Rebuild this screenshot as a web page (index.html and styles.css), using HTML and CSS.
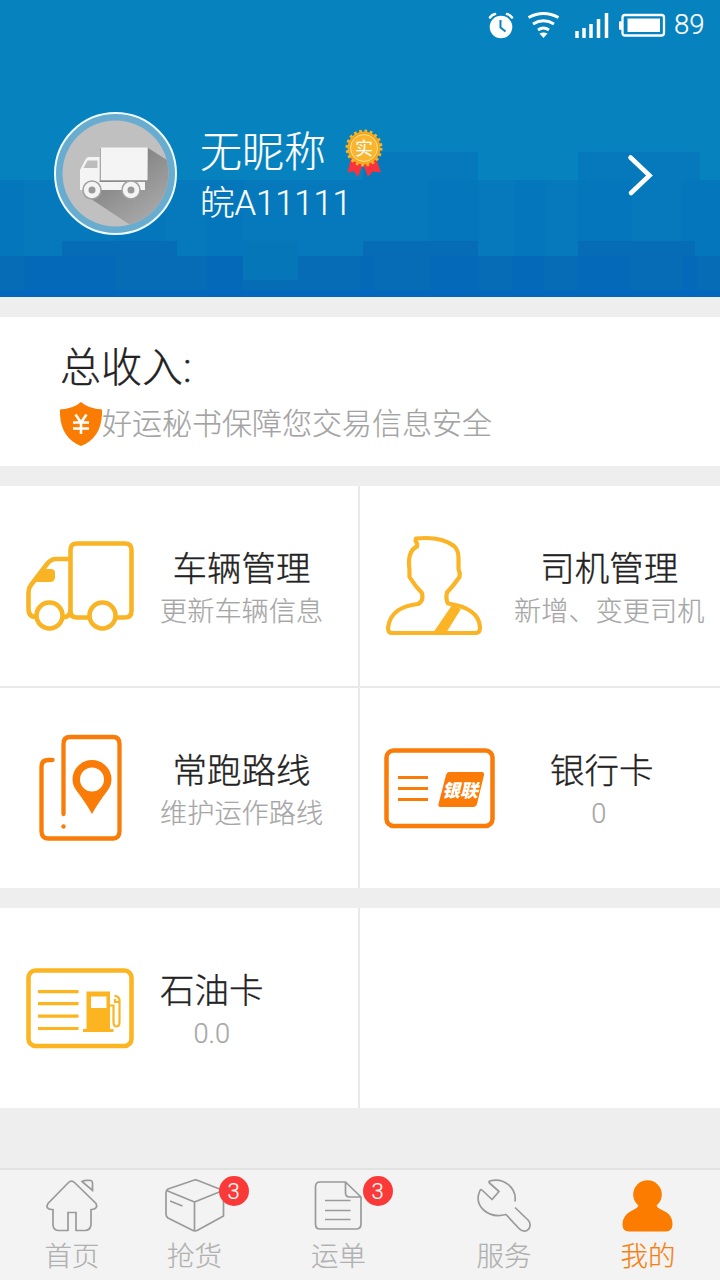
FILE: index.html
```html
<!DOCTYPE html>
<html lang="zh-CN">
<head>
<meta charset="utf-8">
<title>我的</title>
<link rel="stylesheet" href="styles.css">
</head>
<body>
<div class="app">
  <header class="hero">
    <svg class="skyline" viewBox="0 0 720 297">
      <rect width="720" height="297" fill="#0682bf"/>
      <g fill="#0470b8" fill-opacity=".5">
        <rect y="180" width="363" height="76"/><rect x="363" y="152" width="115" height="104"/>
        <rect x="478" y="180" width="100" height="76"/>
        <rect x="578" y="152" width="122" height="104"/><rect x="700" y="180" width="20" height="76"/>
      </g>
      <g fill="#0367b9" fill-opacity=".16">
        <rect y="180" width="24" height="76"/><rect x="115" y="180" width="50" height="61"/>
        <rect x="207" y="180" width="36" height="76"/><rect x="428" y="180" width="50" height="61"/>
        <rect x="515" y="180" width="30" height="76"/><rect x="578" y="180" width="54" height="61"/>
        <rect x="682" y="180" width="38" height="76"/>
      </g>
      <path fill="#066cb5" d="M0 256H62V241H177V256H363V241H478V256H578V241H695V256H720V297H0Z"/>
      <g fill="#0366bf" fill-opacity=".4">
        <rect x="24" y="256" width="38" height="41"/><rect x="62" y="256" width="54" height="41"/>
        <rect x="360" y="256" width="14" height="41"/><rect x="430" y="256" width="49" height="41"/>
        <rect x="512" y="256" width="32" height="41"/><rect x="578" y="256" width="52" height="41"/>
        <rect x="683" y="256" width="14" height="41"/><rect x="207" y="256" width="36" height="41"/>
      </g>
      <rect x="243" y="241" width="55" height="39" fill="#0577b9"/>
      <rect y="290" width="720" height="7" fill="#0467be"/>
    </svg>
    <div class="statusbar">
      <svg class="st-clock" viewBox="488 10 26 30"><circle cx="501" cy="27" r="11.3" fill="#fff"/><path d="M490 17.5q2-3 5-3.5M512 17.5q-2-3-5-3.5" stroke="#fff" stroke-width="2.6" fill="none" stroke-linecap="round"/><path d="M500.5 20v7.500l5 4" stroke="#0682bf" stroke-width="2" fill="none"/></svg>
      <svg class="st-wifi" viewBox="526 10 34 30" fill="none" stroke="#fff" stroke-width="2.800"><path d="M528.500 17.500q15-8 30 0M533 24q10.500-6.500 21 0M538 30q5.500-4 11 0"/><path d="M539.500 33.500q4-2 8 0l-4 4.500z" fill="#fff" stroke="none"/></svg>
      <svg class="st-signal" viewBox="574 10 36 30" stroke="#fff" stroke-width="3.500"><path d="M577 31v7M584 28v10M591 24v14M598.500 19v19M606.500 13v25"/></svg>
      <svg class="st-battery" viewBox="618 10 48 30"><rect x="622.500" y="15" width="41.500" height="20.500" rx="2.500" fill="none" stroke="#fff" stroke-width="2.300"/><rect x="627.500" y="18.500" width="32.500" height="13.500" fill="#fff"/><rect x="619" y="21" width="3" height="9" rx="1.500" fill="#fff"/></svg>
      <span class="st-level">89</span>
    </div>
    <div class="profile">
      <svg class="avatar" viewBox="53 111 125 125">
        <defs>
          <linearGradient id="shade" x1="0" y1="0" x2=".7" y2="1"><stop offset=".3" stop-color="#858585"/><stop offset="1" stop-color="#b4b3b3"/></linearGradient>
          <clipPath id="disc"><circle cx="115.500" cy="173.500" r="53"/></clipPath>
        </defs>
        <circle cx="115.500" cy="173.500" r="60.500" fill="#68accf" stroke="#effcff" stroke-width="2"/>
        <circle cx="115.500" cy="173.500" r="53" fill="#c1c0c0"/>
        <path clip-path="url(#disc)" fill="url(#shade)" d="M148 148L180 168V240H153L88 197L100 180H147Z"/>
        <path fill="#f4f4f4" d="M80 190.500V170l6-11.500q1-1.500 3-1.500H99.500V182H145V190H80Z"/>
        <rect x="100.500" y="147.500" width="47" height="32.500" fill="#f4f4f4"/>
        <path fill="none" stroke="#a8a8a8" d="M100.500 148V180.500H147"/>
        <path fill="#bcbcbc" d="M83.500 168l4-7.500h10V168Z"/>
        <g fill="#f4f4f4" stroke="#a0a0a0" stroke-width="1.500"><circle cx="92" cy="190" r="9"/><circle cx="131" cy="190" r="9"/></g>
        <circle cx="92" cy="190" r="3.500" fill="#999"/><circle cx="131" cy="190" r="3.500" fill="#999"/>
      </svg>
      <div class="who">
        <div class="name-row">
          <span class="name">无昵称</span>
          <span class="medal">
            <svg viewBox="344 127 40 51"><path fill="#f8333c" d="M351 158l-3.500 15 6-2 4.500 6 5-13 5 13 4.500-5.500 8.500 1-5-14Z"/><circle cx="364" cy="148" r="16.500" fill="#f5a51c"/><circle cx="364" cy="148" r="17" fill="none" stroke="#f9b324" stroke-width="3" stroke-dasharray="2.670 2.670"/><circle cx="364" cy="148" r="13.500" fill="#f8b52d" stroke="#ffe091" stroke-width="1"/></svg>
            <span class="medal-text">实</span>
          </span>
        </div>
        <div class="plate">皖A11111</div>
      </div>
      <svg class="chevron" viewBox="625 152 30 46"><path d="M630.500 157.500L649.500 175.500L631 193" fill="none" stroke="#fff" stroke-width="4.600" stroke-linecap="round"/></svg>
    </div>
  </header>

  <section class="income">
    <div class="income-title">总收入:</div>
    <div class="assure">
      <svg class="shield" viewBox="60 402 42 44"><path fill="#fb7c02" d="M81 402Q89 409 102 409.500Q103 437 81 446Q59 437 60 409.500Q73 409 81 402Z"/><path d="M75.500 414.500l5.500 8 5.500-8M81 422v12M73 422.500h16M73 428.500h16" fill="none" stroke="#fff" stroke-width="2.600"/></svg>
      <span>好运秘书保障您交易信息安全</span>
    </div>
  </section>

  <section class="grid">
    <div class="cell">
      <svg class="icon" viewBox="24 530 112 112" fill="none" stroke="#f9b425" stroke-width="4.600">
        <path d="M90 617.500H77Q70.500 617.500 70.500 611V550Q70.500 543.500 77 543.500H125Q131.500 543.500 131.500 550V611Q131.500 617.500 125 617.500H115M70.500 559H56Q51 559 47 564L31 585Q28.500 588 28.500 592V609Q28.500 617 36 617M62 617Q70.500 618 70.500 609"/>
        <circle cx="49.500" cy="615.500" r="13"/><circle cx="102.500" cy="615.500" r="13"/>
        <path d="M42 569h9q4 0 4 4v4q0 5-5 5H33Z" fill="#f9b425" stroke="none"/>
      </svg>
      <div class="label label-start"><b>车辆管理</b><span>更新车辆信息</span></div>
    </div>
    <div class="cell">
      <svg class="icon" viewBox="384 530 112 112" fill="none" stroke="#fbb425" stroke-width="4.200" stroke-linejoin="round">
        <path d="M416 538.500Q441 536 454 546Q458.500 550 458.500 558V569Q460.500 573 459.500 577Q454 585 447 592.500Q445.500 599 448 603.500C465 606 479 613 480 627Q480 633 476 633H392Q388 633 388 628C390 611 403 606 418 604Q424 601 422 593Q415 586 409.500 577V570Q407 551 417 546.500Q418 544 415.500 541Z"/>
        <path d="M452 605l9 4-15 24h-13Z" fill="#fbb425" stroke="none"/>
      </svg>
      <div class="label label-driver"><b>司机管理</b><span>新增、变更司机</span></div>
    </div>
    <div class="cell">
      <svg class="icon" viewBox="24 732 112 112" fill="none" stroke="#f97c08" stroke-width="4.300" stroke-linecap="round">
        <path d="M63.500 814V744Q63.500 737 70 737H113Q119.500 737 119.500 744V831Q119.500 838.500 113 838.500H48Q41.500 838.500 41.500 831V767Q41.500 760 48 760H52.500"/>
        <circle cx="63.500" cy="826.500" r="2.200" fill="#f97c08" stroke="none"/>
        <path fill="#f97c08" stroke="none" fill-rule="evenodd" d="M92 814Q86 803 76 790Q72.500 785 72.500 779.500A19.500 19.500 0 0 1 111.500 779.500Q111.500 785 108 790Q98 803 92 814ZM80 779.500a12 12 0 1 0 24 0a12 12 0 1 0-24 0Z"/>
      </svg>
      <div class="label label-start"><b>常跑路线</b><span>维护运作路线</span></div>
    </div>
    <div class="cell">
      <div class="icon card-icon">
        <svg viewBox="384 732 112 112" fill="none" stroke="#fa7b07" stroke-width="4.500">
          <rect x="386.500" y="750.500" width="106" height="75.500" rx="7"/>
          <path d="M398 777.500h30M398 788.500h30M398 799.500h30" stroke-width="3"/>
          <path d="M449 772H481.500Q484.500 772 484 775L477 804Q476 807 473 807H441Q437.500 807 438.500 804L446 775Q447 772 449 772Z" fill="#fa7b07" stroke="none"/>
        </svg>
        <span class="union">银联</span>
      </div>
      <div class="label label-bank"><b>银行卡</b><span class="count">0</span></div>
    </div>
  </section>

  <section class="grid">
    <div class="cell">
      <svg class="icon" viewBox="24 952 112 112" fill="none" stroke="#fcb421" stroke-width="4.500">
        <rect x="28.500" y="970.500" width="103" height="75.500" rx="7"/>
        <path d="M38 991.700h40.500M38 1003.700h40.500M38 1016.200h40.500M38 1028.500h40.500" stroke-width="3.200"/>
        <path fill="#fcb421" stroke="none" fill-rule="evenodd" d="M86.500 991.500H110V1029H113.500V1032H83V1029H86.500ZM91 996.500V1008H106.500V996.500Z"/>
        <path d="M110 1005.500H113.500V1022Q113.500 1026.500 116.500 1026.500T119.500 1022V1000Q119.500 997 114.500 995.500M119 1002h-4v-3" stroke-width="2.200"/>
      </svg>
      <div class="label label-start"><b>石油卡</b><span>0.0</span></div>
    </div>
    <div class="cell"></div>
  </section>

  <nav class="tabs">
    <div class="tab">
      <svg class="tab-icon" viewBox="44 1176 56 58" fill="none" stroke="#9a9a9a" stroke-width="1.700"><path d="M68.500 1182.500Q71.500 1179.500 74.500 1182.500L96 1203.500Q98.500 1208.500 92 1209.500H91V1225Q90 1230.500 85 1230.500H76V1212.500H68V1230.500H58Q53.500 1230 53 1225V1209.500H51Q45 1208.500 48 1203.500ZM82 1181.500Q84 1180 91 1180.500Q92.500 1181 92.500 1183V1190.500Z"/></svg>
      <span>首页</span>
    </div>
    <div class="tab tab-shifted">
      <div class="badged">
        <svg class="tab-icon" viewBox="167 1176 56 58" fill="none" stroke="#9a9a9a" stroke-width="1.700" stroke-linejoin="round"><path d="M194.500 1180Q196 1179.500 198 1180.500L222 1190Q223.500 1191 223.500 1193V1216L198 1230Q195 1232 192 1230L168 1218Q166 1216.500 166 1214V1193Q166 1190 168 1189ZM166.500 1190.500L194.500 1202L223 1190.500M194.500 1202V1231M170 1201l12.500 5"/></svg>
        <i class="dot">3</i>
      </div>
      <span>抢货</span>
    </div>
    <div class="tab tab-shifted">
      <div class="badged">
        <svg class="tab-icon" viewBox="311 1176 56 58" fill="none" stroke="#9a9a9a" stroke-width="1.700"><path d="M345.500 1182H320Q315.500 1182 315.500 1187V1224Q315.500 1229 320 1229H356Q361 1229 361 1224V1197ZM345.500 1182V1193Q345.500 1197 350 1197H361M325 1200.500h25.500M325 1210.500h25.500M325 1219.500h25.500"/></svg>
        <i class="dot">3</i>
      </div>
      <span>运单</span>
    </div>
    <div class="tab">
      <svg class="tab-icon" viewBox="476 1176 56 58" fill="none" stroke="#9a9a9a" stroke-width="1.700" stroke-linejoin="round"><path d="M515 1201.500C517 1188 504 1177 489.500 1181Q488.500 1182 489.500 1183L499 1191.500L492 1199.500L482 1190Q481 1189 480 1190.500C473 1206 488 1219 506 1214.500L519 1228.500C526 1236 534 1226 528 1220L515 1207.500"/></svg>
      <span>服务</span>
    </div>
    <div class="tab tab-active">
      <svg class="tab-icon" viewBox="620 1176 56 58" fill="#fc7c00"><circle cx="647.500" cy="1194.500" r="14.300"/><path d="M639 1204H656Q657 1208 661 1209.500C670 1213 672.500 1218 672.500 1225Q672 1231 666 1231.500H629Q622.500 1231 622.500 1225C622.500 1218 626 1213 634 1209.500Q638 1208 639 1204Z"/></svg>
      <span>我的</span>
    </div>
  </nav>
</div>
</body>
</html>
```

FILE: styles.css
```css
* { box-sizing: border-box; }
body {
  margin: 0;
  font-family: Roboto, "Noto Sans CJK SC", sans-serif;
  font-weight: 300;
  -webkit-text-stroke: .2px currentColor;
  background: #eee;
}
svg { display: block; }
.app {
  width: 720px;
  height: 1280px;
  display: flex;
  flex-direction: column;
  background: #eee;
  overflow: hidden;
}

.hero {
  position: relative;
  height: 297px;
  flex: none;
  color: #fff;
}
.skyline { position: absolute; inset: 0; width: 720px; height: 297px; }
.statusbar {
  position: relative;
  display: flex;
  align-items: center;
  height: 50px;
  padding-left: 488px;
}
.st-clock { width: 26px; height: 30px; margin-right: 12px; }
.st-wifi { width: 34px; height: 30px; margin-right: 14px; }
.st-signal { width: 36px; height: 30px; margin-right: 8px; }
.st-battery { width: 48px; height: 30px; margin-right: 8px; }
.st-level { font-size: 27.5px; line-height: 30px; }

.profile {
  position: relative;
  display: flex;
  align-items: flex-start;
  padding: 61px 65px 0 53px;
}
.avatar { width: 125px; height: 125px; margin-right: 22px; }
.who { flex: 1; padding-top: 15px; }
.name-row { display: flex; height: 52px; }
.name { font-size: 42px; line-height: 54px; width: 144px; }
.medal { position: relative; width: 40px; height: 51px; margin-top: 1px; }
.medal-text {
  position: absolute;
  left: 0;
  top: 12px;
  width: 40px;
  font-size: 18px;
  line-height: 20px;
  text-align: center;
  font-weight: 400;
  -webkit-text-stroke: 0;
}
.plate { font-size: 34.5px; line-height: 51px; }
.chevron { width: 30px; height: 46px; margin-top: 41px; }

.income {
  height: 149px;
  margin-top: 20px;
  padding: 22px 60px 0;
  flex: none;
  background: #fff;
}
.income-title {
  font-size: 41px;
  line-height: 58px;
  color: #222;
  -webkit-text-stroke: .35px currentColor;
}
.assure {
  display: flex;
  align-items: flex-start;
  padding-top: 5px;
  font-size: 30px;
  line-height: 44px;
  color: #a3a3a3;
}
.shield { width: 42px; height: 44px; }

.grid {
  display: grid;
  grid-template-columns: 358px 360px;
  grid-auto-rows: 200px;
  gap: 2px;
  margin-top: 20px;
  flex: none;
  background: #e9e9e9;
}
.cell {
  display: flex;
  align-items: center;
  padding-left: 24px;
  background: #fff;
}
.icon { width: 112px; height: 112px; flex: none; }
.card-icon { position: relative; }
.union {
  position: absolute;
  left: 58px;
  top: 49px;
  font-size: 18px;
  line-height: 20px;
  font-weight: 900;
  font-style: italic;
  color: #fff;
  -webkit-text-stroke: 0;
}
.label {
  display: flex;
  flex-direction: column;
  align-items: center;
  padding-top: 10px;
  white-space: nowrap;
}
.label b {
  font-size: 34.5px;
  line-height: 43px;
  font-weight: 300;
  color: #222;
  -webkit-text-stroke: .35px currentColor;
}
.label span { font-size: 27.2px; line-height: 43px; color: #a6a6a6; }
.label .count { margin-right: 6px; }
.label-start { margin-left: 24px; }
.label-driver { margin-left: 18px; }
.label-bank { margin-left: 54px; }

.tabs {
  display: grid;
  grid-template-columns: repeat(5, 144px);
  height: 112px;
  margin-top: auto;
  flex: none;
  border-top: 2px solid #e2e2e2;
  background: #f3f3f3;
}
.tab {
  display: flex;
  flex-direction: column;
  align-items: center;
  padding-top: 6px;
  font-size: 27.5px;
  line-height: 46px;
  color: #b0b0b0;
}
.tab-icon { width: 56px; height: 58px; overflow: visible; }
.tab-shifted { padding-right: 43px; }
.badged { position: relative; }
.dot {
  position: absolute;
  left: 52px;
  top: 0;
  width: 30px;
  height: 30px;
  border-radius: 50%;
  background: #f93a38;
  color: #fff;
  font-size: 22px;
  line-height: 31px;
  font-style: normal;
  text-align: center;
}
.tab-active { color: #f5800f; }
```
